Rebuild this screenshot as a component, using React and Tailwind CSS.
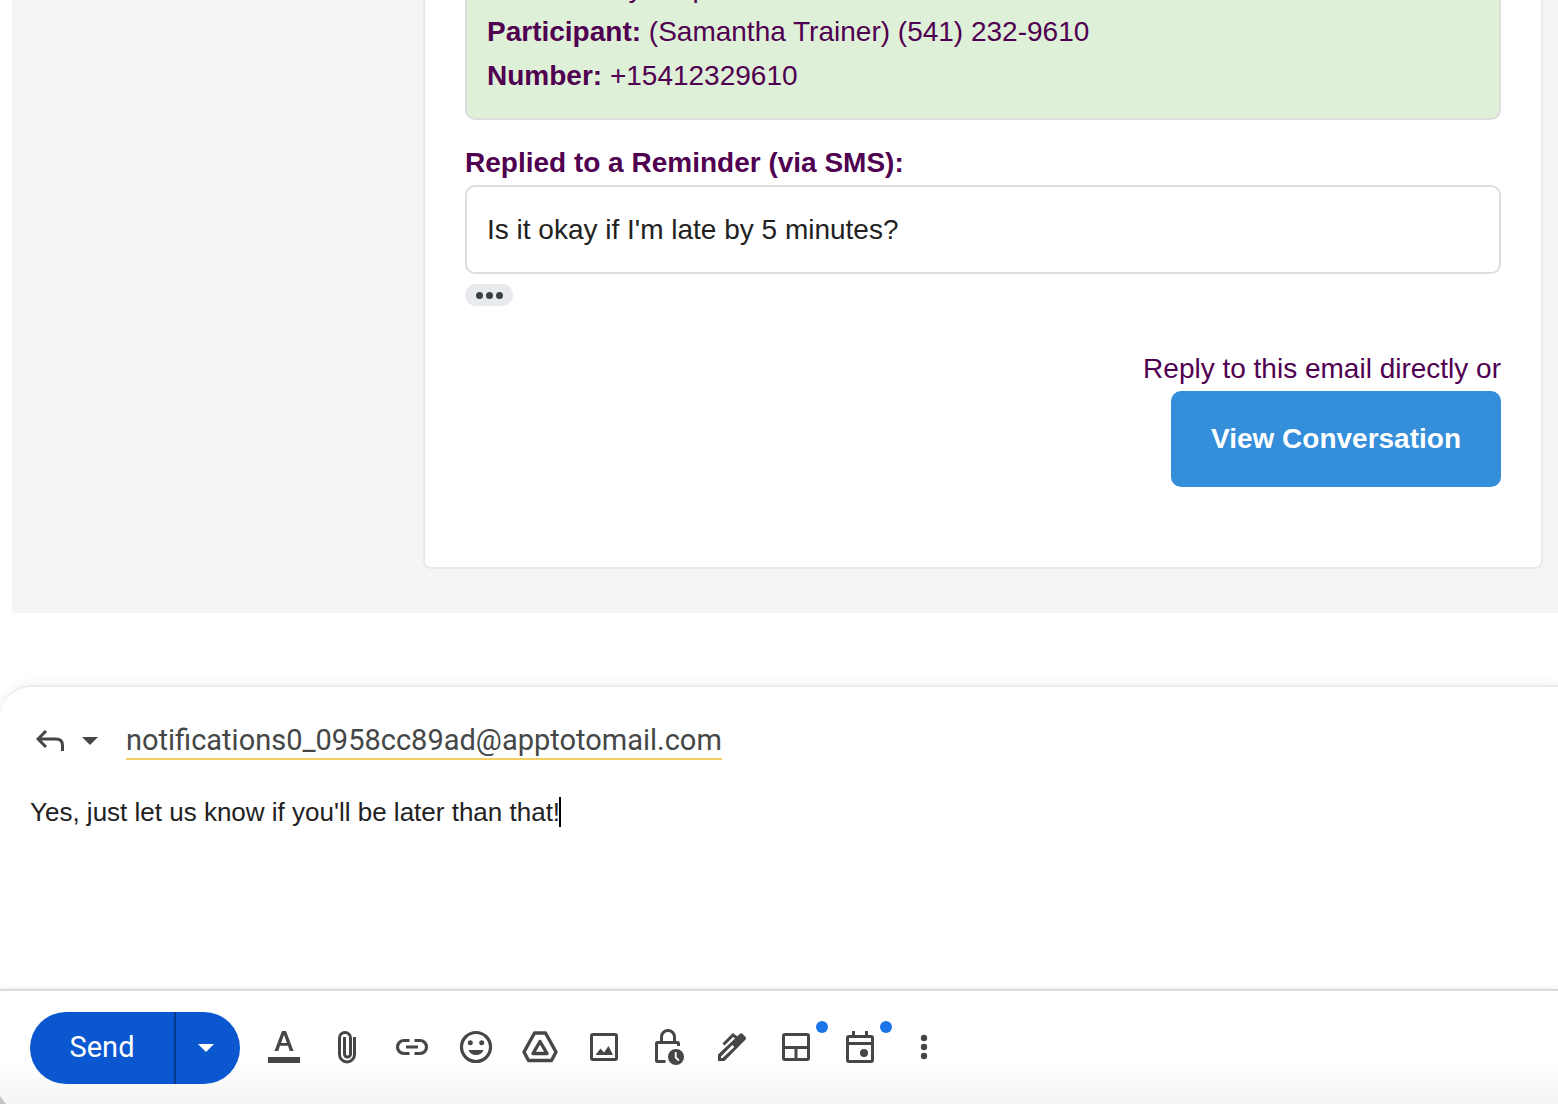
import { clsx } from 'clsx';

const details = [
  { label: 'Event:', value: 'Daily Help' },
  { label: 'Participant:', value: '(Samantha Trainer) (541) 232-9610' },
  { label: 'Number:', value: '+15412329610' },
];

const tools = [
  {
    name: 'Formatting options',
    icon: (
      <>
        <path d="M4 30h32v6H4z" />
        <path fillRule="evenodd" d="M18 4h4L29.500 24h-3.700l-1.800-5.200h-8L14.200 24h-3.700zM20 7.800L17.100 16h5.800z" />
      </>
    ),
  },
  {
    name: 'Attach files',
    icon: (
      <path
        fill="none"
        stroke="currentColor"
        strokeWidth="3"
        d="M26.500 10v17.500a7.500 7.500 0 0 1-15 0V11a5.500 5.500 0 0 1 11 0v16a3 3 0 0 1-6 0V10"
      />
    ),
  },
  {
    name: 'Insert link',
    icon: (
      <path
        fill="none"
        stroke="currentColor"
        strokeWidth="3.200"
        d="M17.500 13.500h-5.500a6.500 6.500 0 0 0 0 13H17.500M22.500 13.500h5.500a6.500 6.500 0 0 1 0 13H22.500M14 20h12"
      />
    ),
  },
  {
    name: 'Insert emoji',
    icon: (
      <>
        <circle cx="20" cy="20" r="14.500" fill="none" stroke="currentColor" strokeWidth="3.200" />
        <circle cx="14.300" cy="15.700" r="2.500" />
        <circle cx="25.700" cy="15.700" r="2.500" />
        <path d="M12.500 23h15c-1.200 3.400-4 5-7.500 5s-6.300-1.600-7.500-5z" />
      </>
    ),
  },
  {
    name: 'Insert files using Drive',
    icon: (
      <g fill="none" stroke="currentColor" strokeWidth="3.400" strokeLinejoin="round">
        <path d="M14.500 6h11L36 25l-4.500 8.500H8.500L4 25z" />
        <path d="M20 14.500l7 12H13z" />
      </g>
    ),
  },
  {
    name: 'Insert photo',
    icon: (
      <>
        <rect x="7.500" y="7.500" width="25" height="25" rx="1.500" fill="none" stroke="currentColor" strokeWidth="3" />
        <path d="M11.500 28l5-6.500 3.500 4 4.500-6.500L29 28z" />
      </>
    ),
  },
  {
    name: 'Toggle confidential mode',
    icon: (
      <>
        <path
          fill="none"
          stroke="currentColor"
          strokeWidth="3"
          d="M17.500 34.500H9.500a1 1 0 0 1-1-1V16.500a1 1 0 0 1 1-1h20a1 1 0 0 1 1 1v2.500M13.500 15.500V10a6.500 6.500 0 0 1 13 0v5.500"
        />
        <circle cx="28" cy="30" r="8" />
        <path fill="none" stroke="#fff" strokeWidth="1.800" d="M27.700 25v5.500l3.300 3.200" />
      </>
    ),
  },
  {
    name: 'Insert signature',
    icon: (
      <>
        <path fill="none" stroke="currentColor" strokeWidth="3" d="M11.500 17.500L21 8l4 3" />
        <path
          fillRule="evenodd"
          d="M28 6.800q1.200-1 2.400 0l3.200 3.200q1 1.200 0 2.400L12.500 34H6v-6.500zM20.300 18L9 29.500v1.500h1.500L22.300 20z"
        />
      </>
    ),
  },
  {
    name: 'Select a layout',
    badge: true,
    icon: (
      <>
        <rect x="7.500" y="7.500" width="25" height="25" rx="1.500" fill="none" stroke="currentColor" strokeWidth="3" />
        <path fill="none" stroke="currentColor" strokeWidth="3" d="M7 20.500h26M20 20.500V33" />
      </>
    ),
  },
  {
    name: 'Set up a time to meet',
    badge: true,
    icon: (
      <>
        <rect x="7.500" y="9.500" width="25" height="25" rx="1.500" fill="none" stroke="currentColor" strokeWidth="3" />
        <path fill="none" stroke="currentColor" strokeWidth="3" d="M7 16.500h26M13.500 4v6M26.500 4v6" />
        <circle cx="24" cy="26" r="4" />
      </>
    ),
  },
  {
    name: 'More options',
    icon: (
      <>
        <circle cx="20" cy="11" r="3.200" />
        <circle cx="20" cy="20" r="3.200" />
        <circle cx="20" cy="29" r="3.200" />
      </>
    ),
  },
];

function Caret({ className }) {
  return (
    <svg viewBox="0 0 16 8" className={clsx('w-4 h-2', className)} fill="currentColor" aria-hidden="true">
      <path d="M0 0h16l-8 8z" />
    </svg>
  );
}

function EmailMessage() {
  return (
    <section className="ml-3 bg-[#f5f5f5] pl-[411px] pr-[15px] pb-11">
      <div className="bg-white border-2 border-t-0 border-[#e9e9e9] rounded-b-lg px-10 pb-20 text-[28px] leading-[45px] text-[#500050]">
        <div className="bg-[#dff0d8] border-2 border-t-0 border-[#dddddd] rounded-b-[10px] px-5 pb-5 leading-11">
          {/* first row is scrolled partly out of view */}
          <div className="-mt-[34px]">
            {details.map((d) => (
              <p key={d.label}>
                <strong>{d.label}</strong> {d.value}
              </p>
            ))}
          </div>
        </div>

        <h2 className="font-bold mt-5">Replied to a Reminder (via SMS):</h2>
        <div className="border-2 border-[#dddddd] rounded-[10px] px-5 py-5 text-[#222222]">
          <p>Is it okay if I'm late by 5 minutes?</p>
        </div>
        <button aria-label="Show trimmed content" className="flex items-center justify-center gap-[3px] mt-2.5 w-12 h-[22px] rounded-full bg-[#e8eaed]">
          <span className="size-[7px] rounded-full bg-[#3c4043]"></span>
          <span className="size-[7px] rounded-full bg-[#3c4043]"></span>
          <span className="size-[7px] rounded-full bg-[#3c4043]"></span>
        </button>

        <div className="flex flex-col items-end mt-10">
          <p>Reply to this email directly or</p>
          <a href="#conversation" className="bg-[#348eda] text-white font-bold leading-11 rounded-[10px] px-10 py-[26px]">
            View Conversation
          </a>
        </div>
      </div>
    </section>
  );
}

function ReplyHeader() {
  return (
    <div className="flex items-center h-11 pl-9">
      <button aria-label="Reply type" className="flex items-center gap-[18px] text-[#444746]">
        <svg viewBox="0 0 28 22" className="w-7 h-[22px]" fill="none" stroke="currentColor" strokeWidth="3" aria-hidden="true">
          <path d="M10 1L2 9l8 8M2 9h18q6.500 0 6.500 6.500V21" />
        </svg>
        <Caret />
      </button>
      <a href="mailto:notifications0_0958cc89ad@apptotomail.com" className="ml-7 border-b-2 border-[#f2cf63] font-[Roboto,sans-serif] text-[29px] leading-9 text-[#444746]">
        notifications0_0958cc89ad@apptotomail.com
      </a>
    </div>
  );
}

function Toolbar() {
  return (
    <footer className="relative flex items-center h-[115px] pt-px pl-[30px] bg-linear-to-b from-white from-60% to-[#f5f5f5] border-t-2 border-[#d9d9d9] shadow-[0_-2px_4px_rgba(0,0,0,0.06)]">
      <div className="flex h-[72px] rounded-full overflow-hidden bg-[#0b57d0] text-white">
        <button className="w-36 font-[Roboto,sans-serif] text-[29px]">Send</button>
        <button aria-label="More send options" className="flex items-center justify-center w-[66px] pr-1 border-l-2 border-[#083a8c]">
          <Caret />
        </button>
      </div>
      <div className="flex gap-6 ml-6 pb-0.5 text-[#444746]">
        {tools.map((tool) => (
          <button key={tool.name} aria-label={tool.name} className="relative size-10">
            <svg viewBox="0 0 40 40" className="size-10" fill="currentColor" aria-hidden="true">
              {tool.icon}
            </svg>
            {tool.badge && <span className="absolute -top-1.5 -right-3 size-3 rounded-full bg-[#1a73e8]"></span>}
          </button>
        ))}
      </div>
      {/* edge of the card's lower left corner */}
      <svg viewBox="0 0 6 8" className="absolute bottom-0 left-0 w-1.5 h-2" fill="#c4c4c4" aria-hidden="true">
        <path d="M0 0l6 8H0z" />
      </svg>
    </footer>
  );
}

export default function App() {
  return (
    <div className="min-h-screen overflow-hidden flex flex-col bg-white font-['Liberation_Sans',Arial,sans-serif]">
      <EmailMessage />

      <section className="flex flex-col flex-1 mt-[72px] rounded-tl-[32px] border-t-2 border-[#ececec] shadow-[0_0_12px_rgba(0,0,0,0.08)]">
        <div className="flex-1 pt-8">
          <ReplyHeader />
          <div className="relative mt-[27px]">
            <textarea
              aria-label="Message body"
              rows={3}
              defaultValue="Yes, just let us know if you'll be later than that!"
              className="block w-full resize-none px-[30px] text-[26px] leading-11 text-[#222222] outline-none"
            />
            <span className="absolute left-[559px] top-[7px] w-0.5 h-[30px] bg-black"></span>
          </div>
        </div>
        <Toolbar />
      </section>
    </div>
  );
}
